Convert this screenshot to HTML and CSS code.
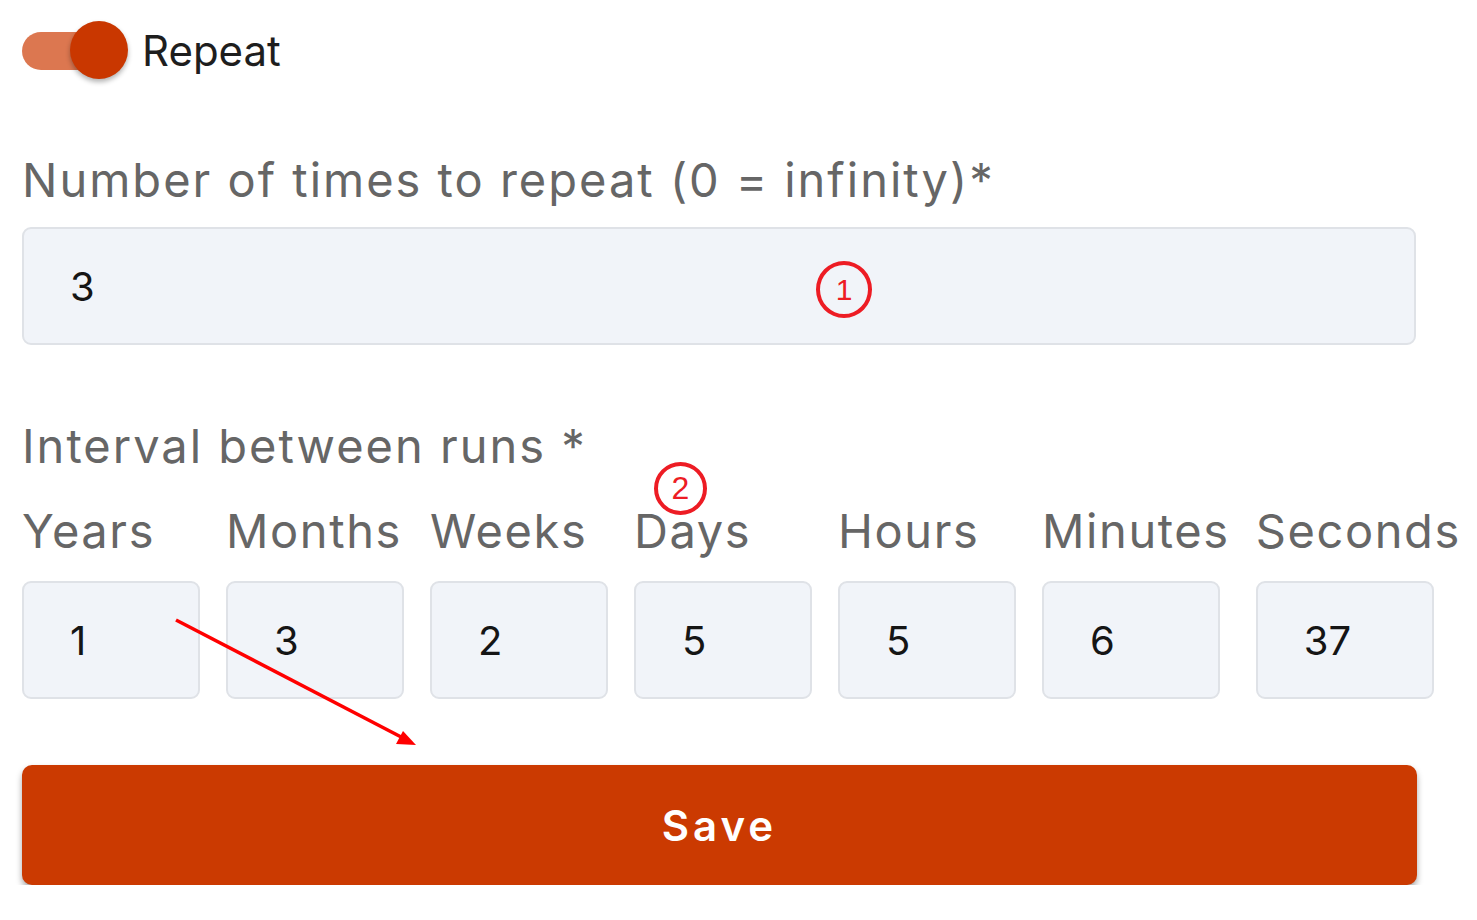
FILE: index.html
```html
<!DOCTYPE html>
<html lang="en">
<head>
    <meta charset="UTF-8">
    <meta name="viewport" content="width=device-width, initial-scale=1.0">
    <title>Repeat settings</title>
    <link rel="stylesheet" href="styles.css">
</head>
<body>
    <div class="form">
        <div class="repeat-row">
            <span class="switch">
                <span class="track"></span>
                <span class="thumb"></span>
            </span>
            <span class="repeat-label">Repeat</span>
        </div>

        <div class="field times">
            <label class="label">Number of times to repeat (0 = infinity)*</label>
            <div class="input wide">3</div>
            <span class="marker marker-1">1</span>
        </div>

        <div class="field interval">
            <label class="label">Interval between runs *</label>
            <span class="marker marker-2">2</span>
            <div class="units">
                <div class="unit"><span class="unit-name">Years</span><div class="input small">1</div></div>
                <div class="unit"><span class="unit-name">Months</span><div class="input small">3</div></div>
                <div class="unit"><span class="unit-name">Weeks</span><div class="input small">2</div></div>
                <div class="unit"><span class="unit-name">Days</span><div class="input small">5</div></div>
                <div class="unit"><span class="unit-name">Hours</span><div class="input small">5</div></div>
                <div class="unit"><span class="unit-name">Minutes</span><div class="input small">6</div></div>
                <div class="unit"><span class="unit-name">Seconds</span><div class="input small">37</div></div>
            </div>
        </div>

        <button class="save">Save</button>

        <!-- annotation arrow -->
        <svg class="arrow" width="260" height="140" viewBox="0 0 260 140">
            <line x1="3" y1="3" x2="232" y2="122" stroke="#f00" stroke-width="3.5"/>
            <polygon points="243,128 223,127 230,114" fill="#f00"/>
        </svg>
    </div>
</body>
</html>
```

FILE: styles.css
```css
body {
    margin: 0;
    background-color: #fff;
    font-family: Inter, "Noto Sans", sans-serif;
}

.form {
    position: relative;
    padding: 20px 0 0 22px;
    width: 1394px;
}

.repeat-row {
    display: flex;
    align-items: center;
    height: 60px;
}

.switch {
    position: relative;
    width: 106px;
    height: 60px;
}

.track {
    position: absolute;
    left: 0;
    top: 12px;
    width: 84px;
    height: 38px;
    border-radius: 19px;
    background-color: #dc7750;
}

.thumb {
    position: absolute;
    left: 48px;
    top: 1px;
    width: 58px;
    height: 58px;
    border-radius: 50%;
    background-color: #c93700;
    box-shadow: 0 3px 5px rgba(0, 0, 0, 0.3);
}

.repeat-label {
    margin-left: 14px;
    font-size: 42px;
    color: #1e1e1e;
}

.field {
    position: relative;
}

.label {
    display: block;
    font-size: 47px;
    letter-spacing: 2px;
    color: #666;
    line-height: 1;
}

.times {
    margin-top: 76px;
}

.times .label {
    margin-bottom: 24px;
}

.input {
    box-sizing: border-box;
    background-color: #f1f4f9;
    border: 2px solid #dfe2e7;
    border-radius: 9px;
    font-size: 40px;
    color: #151515;
    display: flex;
    align-items: center;
    padding-left: 46px;
}

.wide {
    width: 1394px;
    height: 118px;
}

.interval {
    margin-top: 77px;
}

.units {
    display: flex;
    gap: 26px;
    margin-top: 38px;
}

.unit {
    display: flex;
    flex-direction: column;
    gap: 27px;
}

.unit-name {
    font-size: 47px;
    letter-spacing: 1.6px;
    color: #666;
    line-height: 1;
    white-space: nowrap;
}

.small {
    width: 178px;
    height: 118px;
}

.save {
    display: block;
    margin-top: 66px;
    width: 1395px;
    height: 120px;
    border: none;
    border-radius: 10px;
    background-color: #cb3a01;
    color: #fff;
    font-family: Inter, "Noto Sans", sans-serif;
    font-size: 42px;
    font-weight: 600;
    letter-spacing: 4px;
    box-shadow: 0 4px 6px rgba(0, 0, 0, 0.35);
}

.marker {
    position: absolute;
    box-sizing: border-box;
    border: 4px solid #ed1c24;
    border-radius: 50%;
    color: #ed1c24;
    font-family: "Liberation Sans", sans-serif;
    display: flex;
    align-items: center;
    justify-content: center;
}

.marker-1 {
    left: 794px;
    top: 105px;
    width: 56px;
    height: 57px;
    font-size: 30px;
}

.marker-2 {
    left: 632px;
    top: 40px;
    width: 53px;
    height: 53px;
    font-size: 32px;
}

.arrow {
    position: absolute;
    left: 173px;
    top: 617px;
}
```
